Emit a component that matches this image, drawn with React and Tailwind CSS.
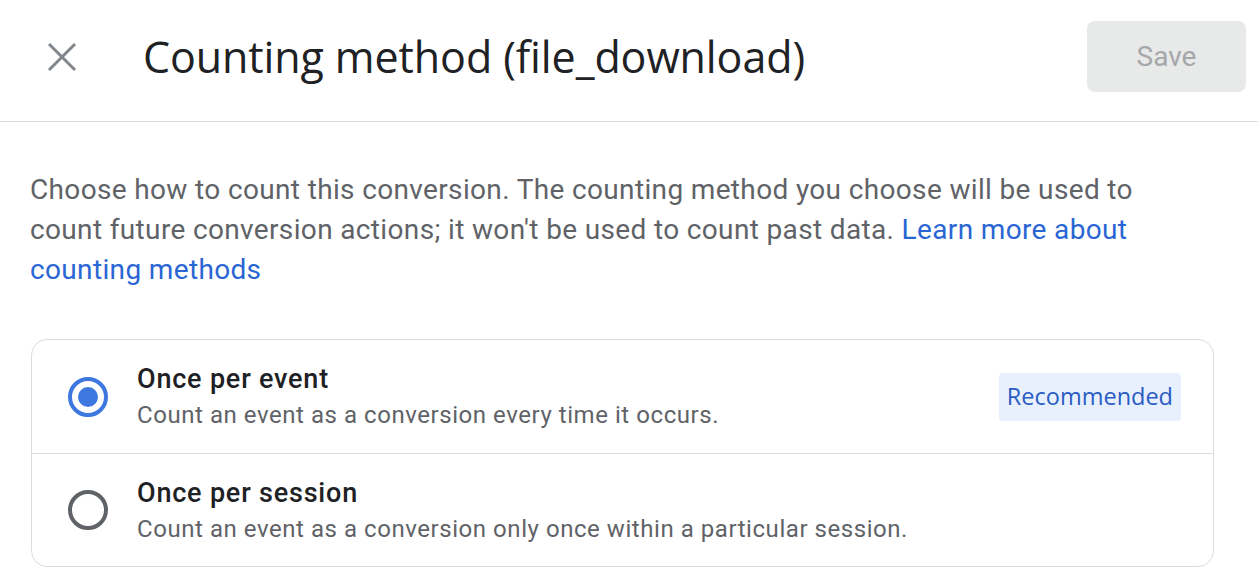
import React, { useState } from 'react';

const OPTIONS = [
  {
    id: 'event',
    title: 'Once per event',
    desc: 'Count an event as a conversion every time it occurs.',
    badge: 'Recommended',
  },
  {
    id: 'session',
    title: 'Once per session',
    desc: 'Count an event as a conversion only once within a particular session.',
  },
];

const Radio = ({ checked }) => (
  <span
    className={`flex h-10 w-10 shrink-0 items-center justify-center rounded-full border-4 ${
      checked ? 'border-[#3c78e0]' : 'border-[#5f6368]'
    }`}
  >
    {checked && <span className="h-5 w-5 rounded-full bg-[#3c78e0]" />}
  </span>
);

export default function App() {
  const [method, setMethod] = useState('event');

  return (
    <div className="h-[588px] w-[1258px] overflow-hidden bg-white font-['Roboto',sans-serif]">
      {/* Header */}
      <div className="flex h-[122px] items-start border-b border-[#dadce0] pl-[44px] pr-3">
        <button className="mt-[39px] flex h-9 w-9 items-center justify-center text-[#80868b]">
          <svg width="30" height="30" viewBox="0 0 30 30" fill="none">
            <path d="M2 2L28 28M28 2L2 28" stroke="currentColor" strokeWidth="3" />
          </svg>
        </button>
        <h1 className="ml-[63px] mt-[31px] flex-1 font-['Open_Sans',sans-serif] text-[43px] leading-[52px] tracking-[-0.1px] text-[#202124]">
          Counting method (file_download)
        </h1>
        <button className="mt-[21px] h-[71px] w-[159px] rounded-lg bg-[#e8e9e9] text-[28px] text-[#a5a7aa]">
          Save
        </button>
      </div>

      {/* Body */}
      <div className="px-[30px] pt-[48px]">
        <p className="max-w-[1170px] text-[28px] leading-10 tracking-[0.35px] text-[#5f6368]">
          Choose how to count this conversion. The counting method you choose will be used to
          count future conversion actions; it won't be used to count past data.{' '}
          <a href="#" className="text-[#2a65d4]">
            Learn more about counting methods
          </a>
        </p>

        <div className="mt-[49px] ml-px mr-[14px] overflow-hidden rounded-2xl border border-[#dadce0]">
          {OPTIONS.map((opt, i) => (
            <div
              key={opt.id}
              onClick={() => setMethod(opt.id)}
              className={`flex h-[113px] cursor-pointer items-center pl-[36px] pr-8 ${
                i > 0 ? 'border-t border-[#dadce0]' : ''
              }`}
            >
              <Radio checked={method === opt.id} />
              <div className="ml-[29px] flex-1">
                <div className="text-[27px] font-medium leading-[34px] tracking-[0.8px] text-[#202124]">
                  {opt.title}
                </div>
                <div className="mt-[3px] text-[24px] leading-8 tracking-[0.55px] text-[#5f6368]">
                  {opt.desc}
                </div>
              </div>
              {opt.badge && (
                <span className="flex h-12 items-center rounded bg-[#e8f0fe] px-2 font-['Open_Sans',sans-serif] text-[23.5px] text-[#2a5cc4]">
                  {opt.badge}
                </span>
              )}
            </div>
          ))}
        </div>
      </div>
    </div>
  );
}
